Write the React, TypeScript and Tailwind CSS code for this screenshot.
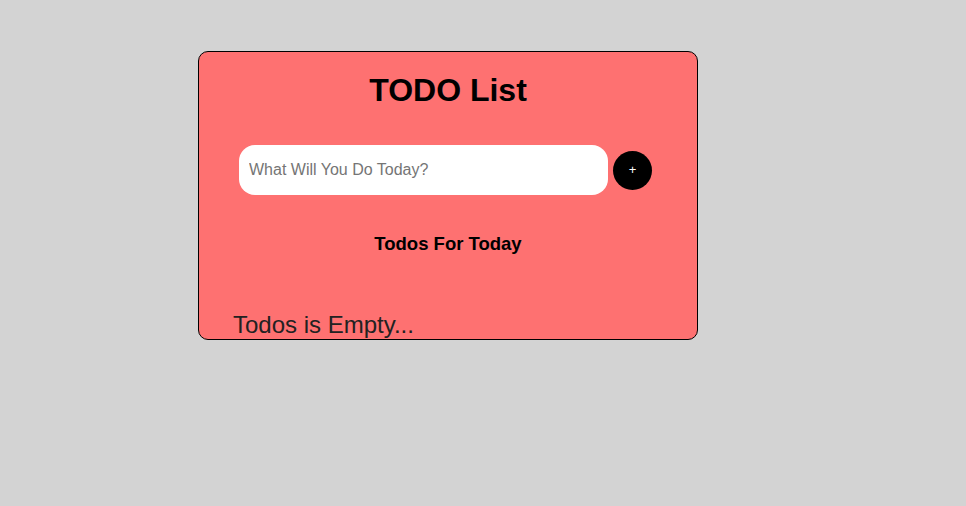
import React, { useState } from 'react'

export default function App() {
  const [text, setText] = useState('')
  const [todos, setTodos] = useState<string[]>([])

  const addTodo = () => {
    if (!text.trim()) return
    setTodos(prev => [...prev, text.trim()])
    setText('')
  }

  return (
    <div className="min-h-screen bg-[#d3d3d3] pl-[198px] pt-[51px] font-['Liberation_Sans',Arial,sans-serif]">
      <div className="w-[500px] h-[289px] overflow-hidden rounded-[10px] border border-black bg-[#fe7171]">
        <h1 className="pt-[20px] text-center text-[32px] font-bold leading-[37px] text-black">TODO List</h1>

        <div className="mt-[36px] ml-[40px] flex items-center gap-[5px]">
          <input
            value={text}
            onChange={e => setText(e.target.value)}
            placeholder="What Will You Do Today?"
            className="h-[50px] w-[369px] rounded-[16px] bg-white px-[10px] text-[16px] text-black outline-none placeholder:text-[#757575]"
          />
          <button
            onClick={addTodo}
            className="flex h-[39px] w-[39px] items-center justify-center rounded-full bg-black text-[13px] text-white"
          >
            +
          </button>
        </div>

        <h3 className="mt-[38px] text-center text-[18.5px] font-bold leading-[21px] text-black">Todos For Today</h3>

        <div className="mt-[57px] pl-[34px]">
          {todos.length === 0 ? (
            <p className="text-[24px] leading-[27px] text-[#222]">Todos is Empty...</p>
          ) : (
            todos.map((t, i) => (
              <p key={i} className="text-[18px] leading-[26px] text-[#222]">{t}</p>
            ))
          )}
        </div>
      </div>
    </div>
  )
}
